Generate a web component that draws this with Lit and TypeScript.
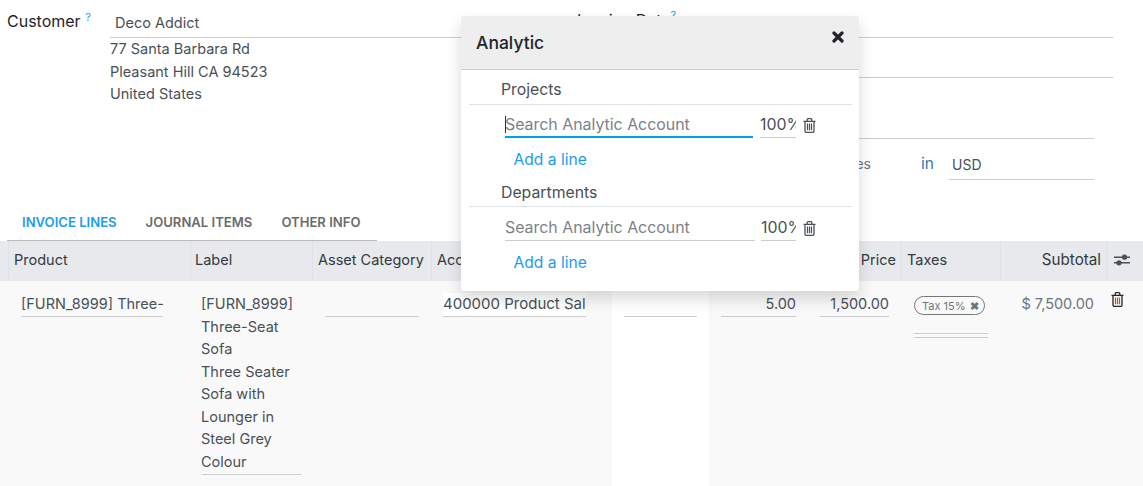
import { LitElement, html, css } from "lit";
import { customElement } from "lit/decorators.js";

const trash = (c = "#495057", bars = "#495057") => html`<svg class="trash" viewBox="0 0 13 15" width="13" height="15" fill="none" stroke="${c}" stroke-width="1.3"><path d="M.5 3.4h12M4.2 3.2V1.6q0-.9.9-.9h2.8q.9 0 .9.9v1.6"/><path d="M2 3.6v9.5q0 1.3 1.2 1.3h6.6q1.2 0 1.2-1.3V3.6"/><path stroke="${bars}" stroke-width="1.2" d="M4.5 5.6v6.6M6.5 5.6v6.6M8.5 5.6v6.6"/></svg>`;

@customElement("app-root")
export class AppRoot extends LitElement {
  static styles = css`
    :host { display: block; position: relative; width: 1143px; height: 486px; overflow: hidden; background: #fff;
      font-family: "Inter", "Liberation Sans", sans-serif; font-size: 14.5px; color: #495057; }
    * { box-sizing: border-box; }
    .top { display: grid; grid-template-columns: 577px 1fr; height: 208px; }
    .left { display: grid; grid-template-columns: 103px 1fr; padding: 12px 0 0 7px; align-content: start; grid-template-rows: 26px auto; }
    .lbl { color: #212529; font-size: 16px; line-height: 18px; display: block; }
    .right .lbl { display: inline-block; line-height: 16px; vertical-align: top; }
    sup { color: #1a9cf0; font-size: 11px; line-height: 0; vertical-align: 6px; margin-left: 0; }
    .cust { border-bottom: 1px solid #ccc; padding-left: 5px; margin-right: 20px; line-height: 22px; }
    .addr { grid-column: 2; line-height: 22.5px; }
    .right { padding-top: 12px; display: flex; flex-direction: column; }
    .r1 { width: 536px; height: 26px; border-bottom: 1px solid #ccc; line-height: 16px; }
    .r2 { width: 536px; height: 40px; border-bottom: 1px solid #ccc; line-height: 50px; padding-left: 200px; }
    .r3 { width: 517px; height: 61px; border-bottom: 1px solid #ccc; }
    .r4 { width: 517px; height: 41px; display: flex; align-items: stretch; }
    .r4 .t { width: 294px; text-align: right; font-size: 14px; line-height: 50px; color: #6c757d; }
    .r4 .in { width: 78px; padding-left: 50px; color: #2f7ab0; font-size: 15.5px; line-height: 50px; }
    .r4 .cur { flex: 1; border-bottom: 1px solid #ccc; padding-left: 3px; line-height: 52px; font-size: 14px; }
    .tabs { display: flex; height: 33px; padding-left: 22px; gap: 29px; font-size: 13.1px; font-weight: 600; color: #6b6b6b; line-height: 29px; position: relative; }
    .tabs .on { color: #1a9cf0; }
    .tabline { position: absolute; left: 7px; width: 370px; bottom: 0; height: 1px; background: #bbb; }
    .grid { display: grid; grid-template-columns: 8px 182px 122px 119px 181px 97px 99px 93px 99px 106px 37px; }
    .h { height: 40px; background: #e7e9ec; border-left: 1px solid #dee2e6; padding: 0 5px; line-height: 38px; color: #343a40; white-space: nowrap; overflow: hidden; font-size: 14.5px; }
    .h:first-child { border-left: 0; }
    .h.label { padding-left: 4px; }
    .h.r { text-align: right; }
    .h.sub-h { font-size: 15.2px; }
    .h.ic { display: flex; align-items: center; padding: 0 0 2px 7px; }
    .c { height: 205px; background: #f9f9f9; padding: 12px 12px 0; }
    .c.w { background: #fff; }
    .c.prod { padding-right: 27px; }
    .c.asset { padding-left: 13px; }
    .c.acct { padding-right: 26px; }
    .c.sub-c { padding: 12px 12px 0 0; }
    .c.act { padding: 11px 0 0 5px; }
    .c.blank { padding: 0; }
    .f { border-bottom: 1px solid #ccc; height: 24px; line-height: 22px; white-space: nowrap; overflow: hidden; }
    .f.r { text-align: right; }
    .f.pre { margin: 0 0 0 1px; }
    .f.white { background: #fff; font-size: 15px; }
    .lab { margin: 0 -1px 0 0; line-height: 22.5px; border-bottom: 1px solid #ccc; padding-bottom: 1px; }
    .lab div { margin-left: -1px; }
    .tag { display: inline-flex; align-items: center; gap: 4px; height: 19px; margin: 3px 0 0 1px; border: 1px solid #777; border-radius: 10px; padding: 0 5px 0 7px; font-size: 11px; color: #6c757d; white-space: nowrap; }
    .tag b { color: #6c757d; font-size: 11px; }
    .dbl { margin: 18px 0 0 1px; height: 5px; width: 74px; border-top: 1px solid #ccc; border-bottom: 1px solid #ccc; }
    .sub { text-align: right; color: #6c757d; line-height: 22px; }
    .modal { position: absolute; left: 461px; top: 16px; width: 398px; height: 275px; background: #fff; border-radius: 3px; box-shadow: 0 8px 16px rgba(0,0,0,.15); z-index: 2; }
    .mh { height: 54px; background: #eeeeef; border-bottom: 1px solid #ccc; border-radius: 3px 3px 0 0; display: flex; justify-content: space-between; padding: 0 15px 0 15px; }
    .mh .t { font-size: 17.5px; font-weight: 500; color: #212529; line-height: 53px; }
    .mh .x { width: 12px; height: 12px; margin-top: 15px; }
    .mb { padding: 9px 7px 0 8px; }
    .sec { height: 26px; line-height: 22px; padding-left: 32px; border-bottom: 1px solid #dee2e6; font-size: 15.8px; }
    .sec.next { margin-top: 10px; line-height: 24px; }
    .line { display: flex; align-items: flex-end; height: 33px; padding-left: 36px; }
    .line.next { height: 34px; }
    .inp { height: 26px; line-height: 26px; border-bottom: 1px solid #ccc; color: #7b8288; font-size: 15.9px; white-space: nowrap; }
    .inp.focus { border-bottom: 2px solid #00a0f5; width: 248px; }
    .inp.plain { width: 250px; }
    .caret { display: inline-block; width: 1px; height: 17px; background: #333; vertical-align: -3px; margin-right: -1px; }
    .pct { height: 26px; line-height: 26px; border-bottom: 1px solid #ccc; font-size: 15.9px; overflow: hidden; color: #495057; white-space: nowrap; }
    .pct.a { width: 36px; margin-left: 7px; }
    .pct.b { width: 35px; margin-left: 6px; }
    .line .trash { margin: 0 0 5px 7px; }
    .add { display: block; color: #1a9cf0; padding-left: 44.5px; height: 33px; line-height: 43px; font-size: 15.6px; }
  `;
  render() {
    return html`
      <div class="top">
        <div class="left">
          <div class="lbl">Customer <sup>?</sup></div>
          <div class="cust">Deco Addict</div>
          <div class="addr">77 Santa Barbara Rd<br>Pleasant Hill CA 94523<br>United States</div>
        </div>
        <div class="right">
          <div class="r1"><span class="lbl">Invoice Date</span><sup>?</sup></div>
          <div class="r2">01/03/2023</div>
          <div class="r3"></div>
          <div class="r4"><div class="t">Taxes</div><div class="in">in</div><div class="cur">USD</div></div>
        </div>
      </div>
      <div class="tabs"><span class="on">INVOICE LINES</span><span>JOURNAL ITEMS</span><span>OTHER INFO</span><div class="tabline"></div></div>
      <div class="grid">
        <div class="h"></div><div class="h">Product</div><div class="h label">Label</div><div class="h">Asset Category</div><div class="h">Account</div>
        <div class="h"></div><div class="h r">Quantity</div><div class="h r">Unit Price</div><div class="h">Taxes</div><div class="h r sub-h">Subtotal</div>
        <div class="h ic"><svg width="16" height="12" viewBox="0 0 16 12"><path d="M0 3.2h16M0 8.8h16" stroke="#495057" stroke-width="1.4"/><circle cx="10.5" cy="3.2" r="2.6" fill="#495057"/><circle cx="5" cy="8.8" r="2.6" fill="#495057"/></svg></div>

        <div class="c blank"></div>
        <div class="c prod"><div class="f pre">[FURN_8999] Three-Seat Sofa</div></div>
        <div class="c"><div class="lab"><div>[FURN_8999]<br>Three-Seat<br>Sofa<br>Three Seater<br>Sofa with<br>Lounger in<br>Steel Grey<br>Colour</div></div></div>
        <div class="c asset"><div class="f"></div></div>
        <div class="c acct"><div class="f white">400000 Product Sales</div></div>
        <div class="c w"><div class="f"></div></div>
        <div class="c"><div class="f r">5.00</div></div>
        <div class="c"><div class="f r">1,500.00</div></div>
        <div class="c"><div class="tag">Tax 15% <b>✖</b></div><div class="dbl"></div></div>
        <div class="c sub-c"><div class="sub">$ 7,500.00</div></div>
        <div class="c act">${trash("#2a2320", "#c0561a")}</div>
      </div>
      <div class="modal">
        <div class="mh"><div class="t">Analytic</div><svg class="x" viewBox="0 0 12 12"><path d="M2 2l8 8M10 2l-8 8" stroke="#212529" stroke-width="3.2" stroke-linecap="round"/></svg></div>
        <div class="mb">
          <div class="sec">Projects</div>
          <div class="line"><div class="inp focus"><span class="caret"></span>Search Analytic Account</div><div class="pct a">100%</div>${trash()}</div>
          <a class="add">Add a line</a>
          <div class="sec next">Departments</div>
          <div class="line next"><div class="inp plain">Search Analytic Account</div><div class="pct b">100%</div>${trash()}</div>
          <a class="add">Add a line</a>
        </div>
      </div>
    `;
  }
}
